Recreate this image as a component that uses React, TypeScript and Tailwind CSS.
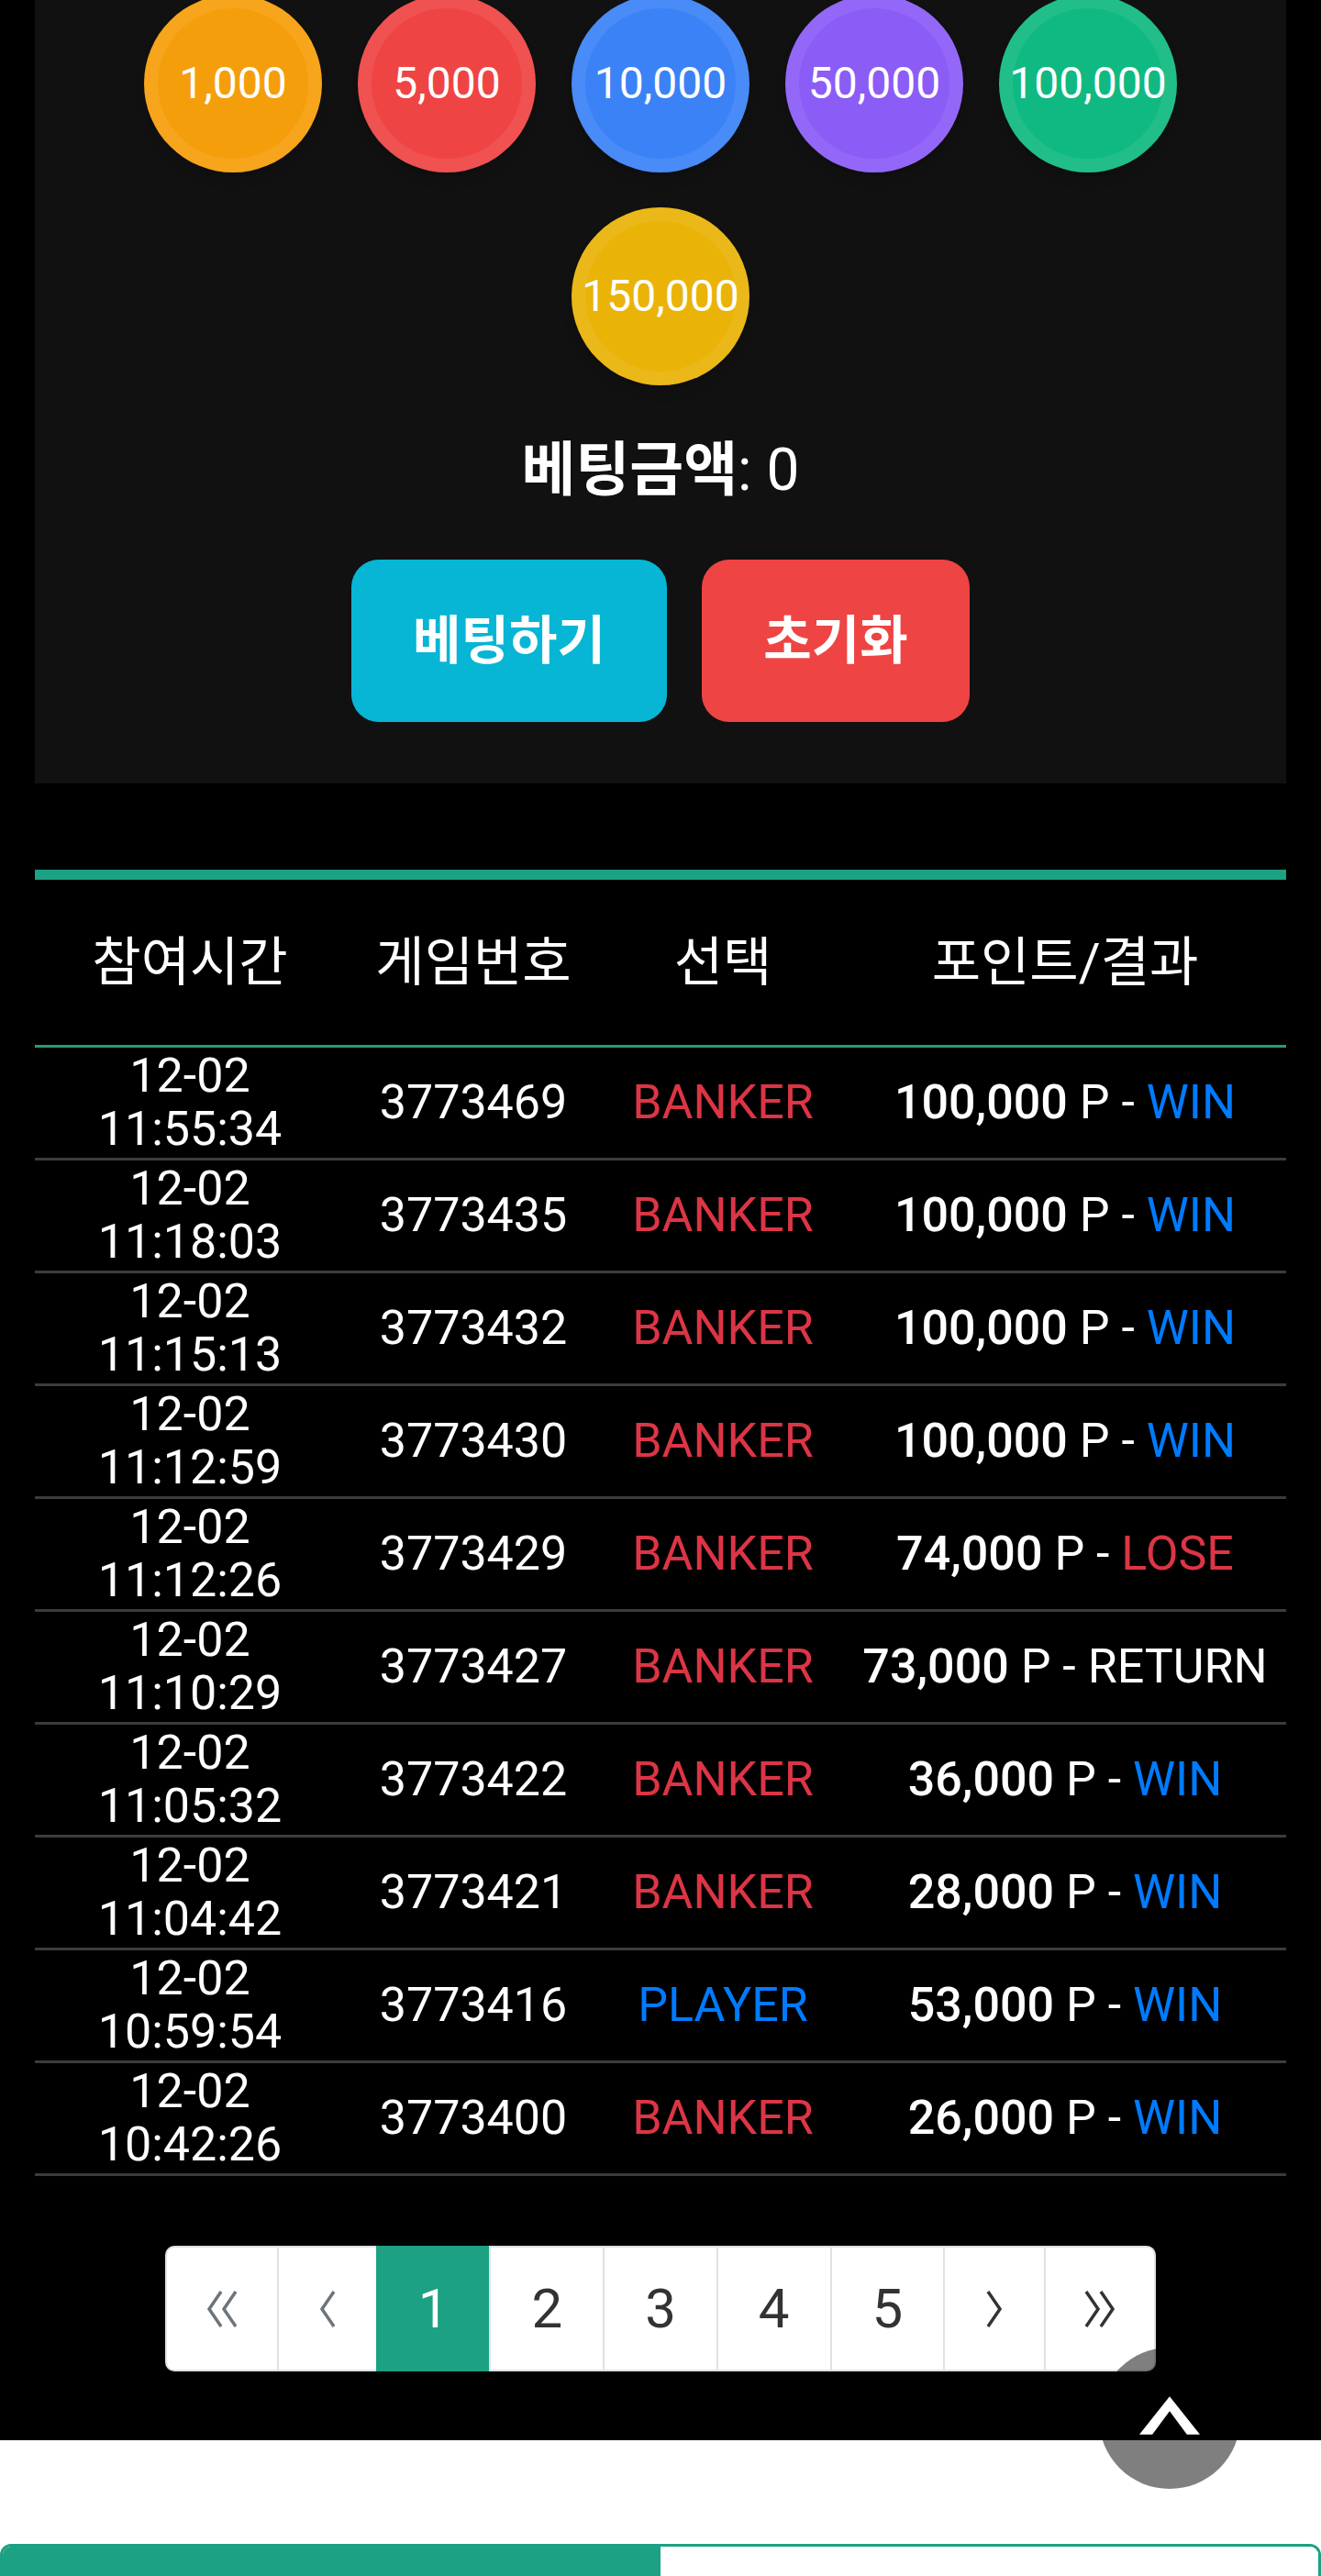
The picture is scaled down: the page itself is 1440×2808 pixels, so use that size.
import React from 'react';

// Betting panel + recent history table (mobile layout rendered at 3x)

const CHIPS = [
  { label: '1,000', color: 'bg-[#f59e0b]' },
  { label: '5,000', color: 'bg-[#ef4444]' },
  { label: '10,000', color: 'bg-[#3b82f6]' },
  { label: '50,000', color: 'bg-[#8b5cf6]' },
  { label: '100,000', color: 'bg-[#10b981]' },
  { label: '150,000', color: 'bg-[#eab308]' },
];

type Result = 'WIN' | 'LOSE' | 'RETURN';

const HISTORY: { date: string; time: string; game: string; pick: 'BANKER' | 'PLAYER'; amount: string; result: Result }[] = [
  { date: '12-02', time: '11:55:34', game: '3773469', pick: 'BANKER', amount: '100,000', result: 'WIN' },
  { date: '12-02', time: '11:18:03', game: '3773435', pick: 'BANKER', amount: '100,000', result: 'WIN' },
  { date: '12-02', time: '11:15:13', game: '3773432', pick: 'BANKER', amount: '100,000', result: 'WIN' },
  { date: '12-02', time: '11:12:59', game: '3773430', pick: 'BANKER', amount: '100,000', result: 'WIN' },
  { date: '12-02', time: '11:12:26', game: '3773429', pick: 'BANKER', amount: '74,000', result: 'LOSE' },
  { date: '12-02', time: '11:10:29', game: '3773427', pick: 'BANKER', amount: '73,000', result: 'RETURN' },
  { date: '12-02', time: '11:05:32', game: '3773422', pick: 'BANKER', amount: '36,000', result: 'WIN' },
  { date: '12-02', time: '11:04:42', game: '3773421', pick: 'BANKER', amount: '28,000', result: 'WIN' },
  { date: '12-02', time: '10:59:54', game: '3773416', pick: 'PLAYER', amount: '53,000', result: 'WIN' },
  { date: '12-02', time: '10:42:26', game: '3773400', pick: 'BANKER', amount: '26,000', result: 'WIN' },
];

const resultColor = (r: Result) => {
  if (r === 'WIN') return 'text-[#007bff]';
  if (r === 'LOSE') return 'text-[#dc3545]';
  return 'text-white';
};

// thin chevrons for the first/prev/next/last page links
function Chevrons({ dir, double }: { dir: 'left' | 'right'; double?: boolean }) {
  const w = double ? 36 : 20;
  const one = dir === 'left' ? '17,2 4,21 17,40' : '3,2 16,21 3,40';
  const two = dir === 'left' ? '33,2 20,21 33,40' : '19,2 32,21 19,40';
  return (
    <svg width={w} height="42" viewBox={`0 0 ${w} 42`} fill="none" stroke="currentColor" strokeWidth="3.5">
      <polyline points={one} />
      {double && <polyline points={two} />}
    </svg>
  );
}

const PAGES: { key: string; content: React.ReactNode; tone: string; pad: string; active?: boolean }[] = [
  { key: 'first', content: <Chevrons dir="left" double />, tone: 'text-[#6c757d]', pad: 'px-[42px]' },
  { key: 'prev', content: <Chevrons dir="left" />, tone: 'text-[#6c757d]', pad: 'px-[43px]' },
  { key: '1', content: '1', tone: 'text-white', pad: 'px-[44px]', active: true },
  { key: '2', content: '2', tone: 'text-[#333]', pad: 'px-[44px]' },
  { key: '3', content: '3', tone: 'text-[#333]', pad: 'px-[44px]' },
  { key: '4', content: '4', tone: 'text-[#333]', pad: 'px-[44px]' },
  { key: '5', content: '5', tone: 'text-[#333]', pad: 'px-[44px]' },
  { key: 'next', content: <Chevrons dir="right" />, tone: 'text-[#333]', pad: 'px-[44px]' },
  { key: 'last', content: <Chevrons dir="right" double />, tone: 'text-[#333]', pad: 'px-[41px]' },
];

export default function App() {
  return (
    <div className="min-h-screen bg-white font-[Roboto,'Noto_Sans_CJK_KR',sans-serif]">
      <div className="flow-root bg-black pb-[75px]">
        {/* Bet panel */}
        <div className="mx-[38px] -mt-[6px] bg-[#111111] pb-[67px]">
          <div className="mx-auto flex w-[1200px] flex-wrap justify-center gap-x-[39px] gap-y-[38px]">
            {CHIPS.map((chip) => (
              <button
                key={chip.label}
                className={`flex h-[194px] w-[194px] items-center justify-center whitespace-nowrap rounded-full border-[15px] border-white/[0.07] ${chip.color} text-[48px] leading-none text-white shadow-lg`}
              >
                {chip.label}
              </button>
            ))}
          </div>

          <p className="mt-[48px] text-center text-[64px] leading-[90px] text-white">
            <span className="font-bold">베팅금액</span>
            <span>: 0</span>
          </p>

          <div className="mt-[52px] flex justify-center gap-[38px]">
            <button className="h-[177px] w-[344px] rounded-[30px] bg-[#06b6d4] text-[57px] font-bold text-white">
              베팅하기
            </button>
            <button className="h-[177px] w-[292px] rounded-[30px] bg-[#ef4444] text-[57px] font-bold text-white">
              초기화
            </button>
          </div>
        </div>

        {/* History table */}
        <div className="mx-[38px] mt-[94px] border-t-[11px] border-[#1ca182] text-[52px] text-white">
          <div className="grid h-[183px] grid-cols-[338px_280px_264px_1fr] items-center border-b-[3px] border-[#279a7c] text-center text-[58px]">
            <span>참여시간</span>
            <span>게임번호</span>
            <span>선택</span>
            <span>포인트/결과</span>
          </div>
          {HISTORY.map((row) => (
            <div
              key={row.game}
              className="grid h-[123px] grid-cols-[338px_280px_264px_1fr] items-center border-b-[3px] border-[#3c3c3c] text-center leading-[58px]"
            >
              <div className="flex flex-col">
                <span>{row.date}</span>
                <span>{row.time}</span>
              </div>
              <span>{row.game}</span>
              <span className={row.pick === 'BANKER' ? 'text-[#dc3545]' : 'text-[#007bff]'}>{row.pick}</span>
              <span className="whitespace-nowrap">
                <span className="font-medium">{row.amount}</span> P - <span className={resultColor(row.result)}>{row.result}</span>
              </span>
            </div>
          ))}
        </div>

        {/* Pagination */}
        <div className="mt-[76px] flex justify-center">
          <ul className="flex h-[137px]">
            {PAGES.map((p, i) => (
              <li
                key={p.key}
                className={`flex items-center justify-center border-y-2 border-l-2 ${p.pad} text-[60px] leading-none ${
                  p.active ? 'border-[#1ca182] bg-[#1ca182]' : 'border-[#dee2e6] bg-white'
                } ${i === 0 ? 'rounded-l-[10px]' : ''} ${i === PAGES.length - 1 ? 'rounded-r-[10px] border-r-2' : ''} ${p.tone}`}
              >
                {p.content}
              </li>
            ))}
          </ul>
        </div>
      </div>

      {/* Tabs below */}
      <div className="pt-[113px]">
        <div className="flex h-[120px] overflow-hidden rounded-t-[12px] border-[3px] border-[#1ca182]">
          <div className="flex-1 bg-[#1ca182]" />
          <div className="flex-1 bg-white" />
        </div>
      </div>

      {/* Scroll to top */}
      <button className="fixed bottom-[95px] right-[88px] flex h-[154px] w-[154px] items-center justify-center rounded-full bg-black/50">
        <svg width="66" height="42" viewBox="0 0 70 44" className="-mt-[6px]">
          <polygon points="35,0 70,44 55,44 35,17 15,44 0,44" fill="#fff" />
        </svg>
      </button>
    </div>
  );
}
